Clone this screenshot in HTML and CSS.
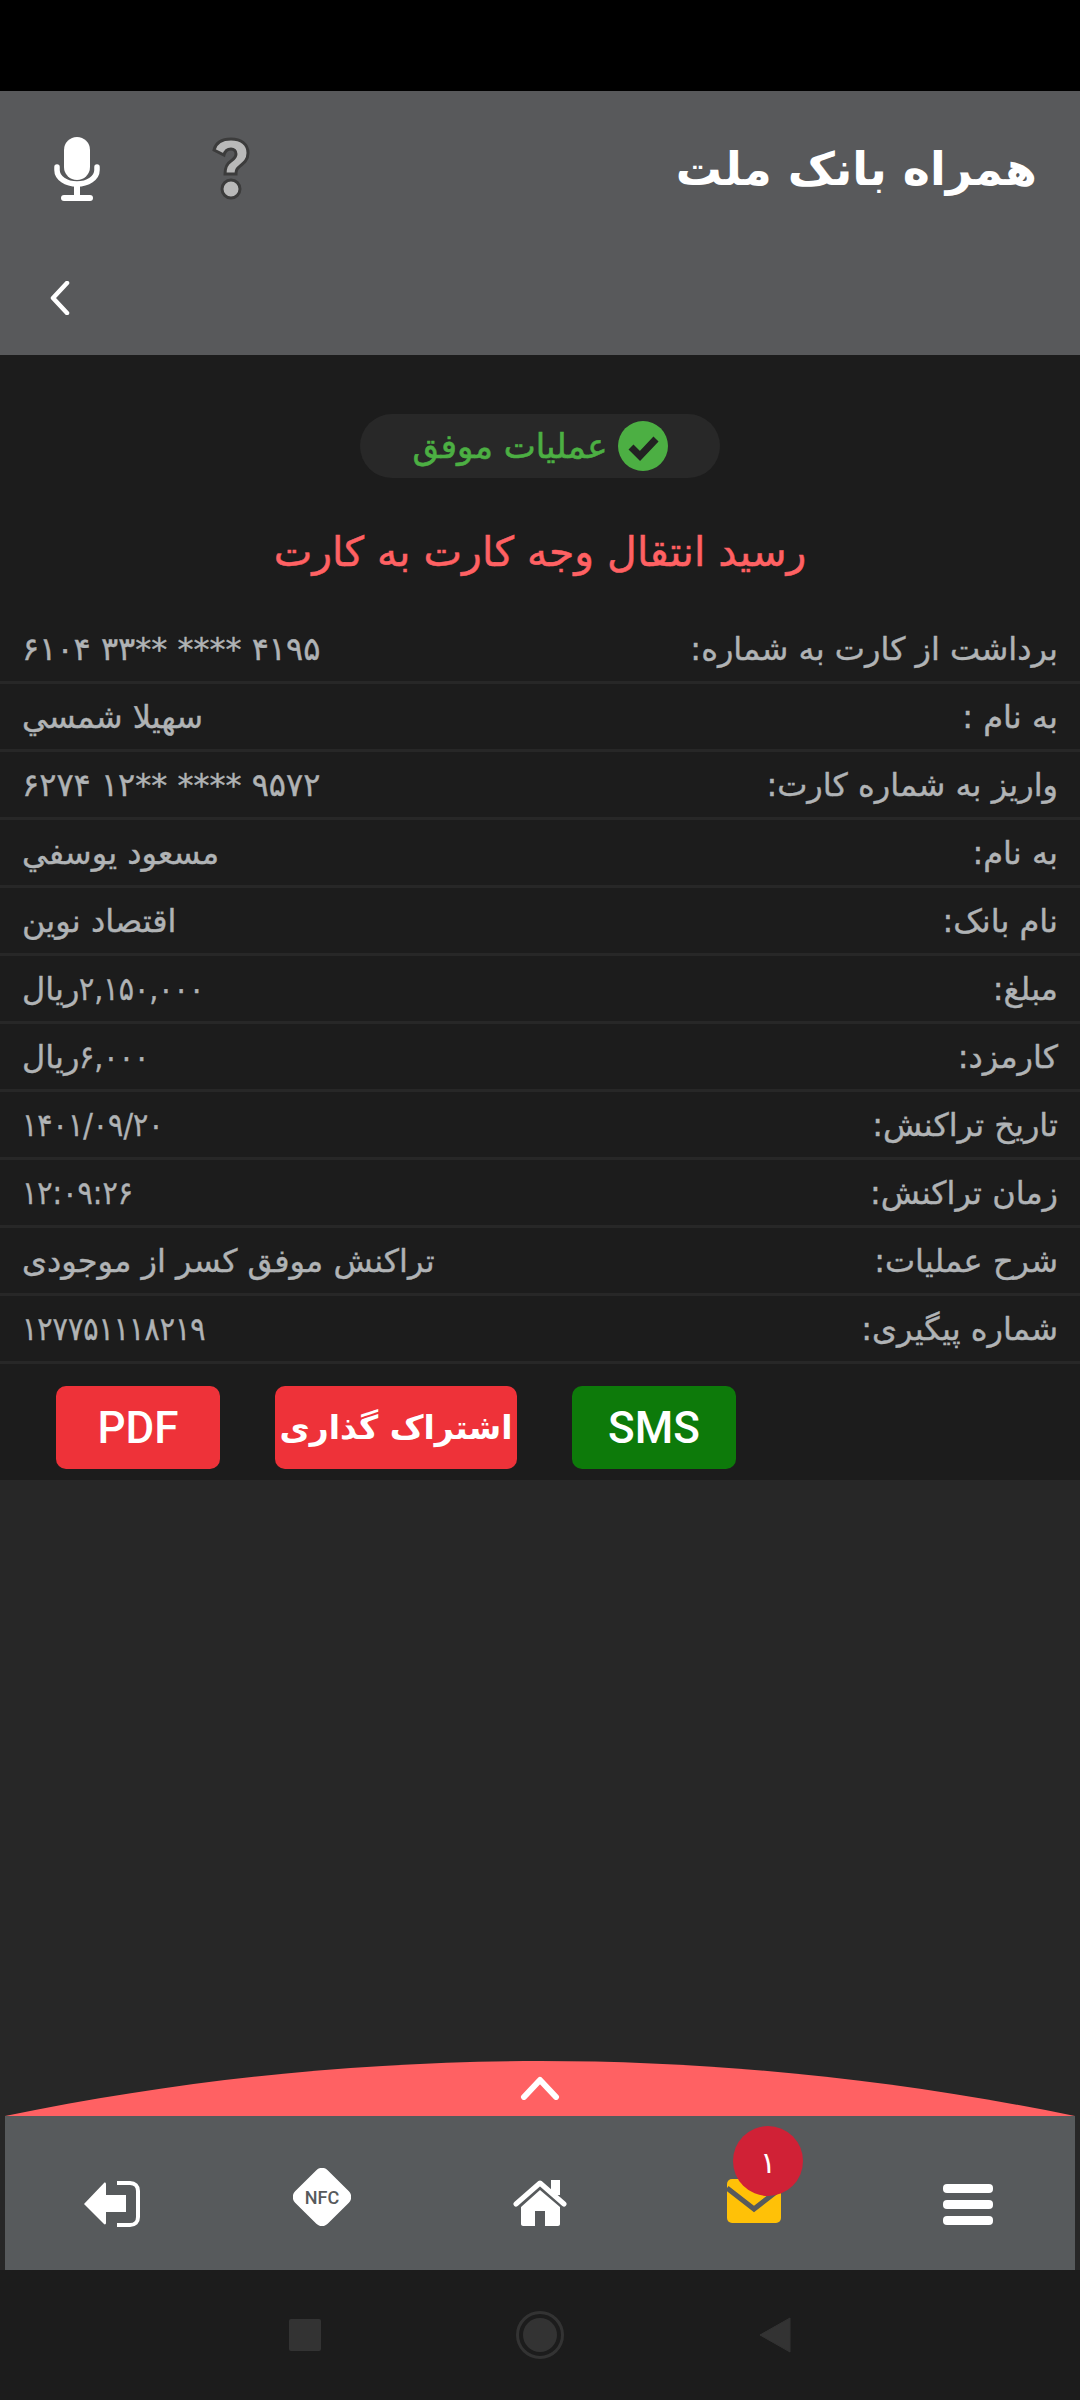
FILE: index.html
```html
<!DOCTYPE html>
<html lang="fa">
<head>
    <meta charset="UTF-8">
    <meta name="viewport" content="width=device-width, initial-scale=1.0">
    <title>همراه بانک ملت</title>
    <link rel="stylesheet" href="styles.css">
</head>
<body>
    <div class="status-bar"></div>

    <div class="header">
        <div class="header-top">
            <h1 class="app-title">همراه بانک ملت</h1>
            <div class="header-actions">
                <svg class="help-icon" viewBox="0 0 40 64"><path d="M3 13C5 5 12 2 20 2c10 0 17 5 17 14 0 7-4 10-9 14-3 2-3 4-3 7H14c0-6 1-10 6-13 3-2 5-4 5-7 0-3-2-5-5-5-4 0-6 2-7 6zM20 43a9 9 0 1 1 0 18 9 9 0 0 1 0-18z" fill="#b9b9b9" stroke="#3c3c3c" stroke-width="3"/></svg>
                <svg class="mic-icon" viewBox="0 0 46 64"><rect x="10" y="0" width="26" height="43" rx="13" fill="#fff"/><path d="M3 30v3c0 8 9 14 20 14s20-6 20-14v-3" fill="none" stroke="#fff" stroke-width="5.5" stroke-linecap="round"/><rect x="20" y="47" width="6" height="12" fill="#fff"/><rect x="7" y="58" width="32" height="6" rx="3" fill="#fff"/></svg>
            </div>
        </div>
        <div class="header-bottom">
            <svg class="back-icon" viewBox="0 0 20 34"><path d="M17 2L3 17l14 15" fill="none" stroke="#fff" stroke-width="4.5" stroke-linecap="round" stroke-linejoin="round"/></svg>
        </div>
    </div>

    <div class="content">
        <div class="receipt">
            <div class="status-pill">
                <svg class="check-icon" viewBox="0 0 50 50"><circle cx="25" cy="25" r="25" fill="#4caf43"/><path d="M13 26l9 9 16-17" fill="none" stroke="#222" stroke-width="7"/></svg>
                <span>عملیات موفق</span>
            </div>
            <h2 class="receipt-title">رسید انتقال وجه کارت به کارت</h2>

            <div class="rows">
                <div class="row"><span class="row-label">برداشت از کارت به شماره:</span><span class="row-value num">۶۱۰۴ ۳۳** **** ۴۱۹۵</span></div>
                <div class="row"><span class="row-label">به نام :</span><span class="row-value">سهيلا شمسي</span></div>
                <div class="row"><span class="row-label">واریز به شماره کارت:</span><span class="row-value num">۶۲۷۴ ۱۲** **** ۹۵۷۲</span></div>
                <div class="row"><span class="row-label">به نام:</span><span class="row-value">مسعود يوسفي</span></div>
                <div class="row"><span class="row-label">نام بانک:</span><span class="row-value">اقتصاد نوین</span></div>
                <div class="row"><span class="row-label">مبلغ:</span><span class="row-value"><span class="digits">۲,۱۵۰,۰۰۰</span>ریال</span></div>
                <div class="row"><span class="row-label">کارمزد:</span><span class="row-value"><span class="digits">۶,۰۰۰</span>ریال</span></div>
                <div class="row"><span class="row-label">تاریخ تراکنش:</span><span class="row-value num digits">۱۴۰۱/۰۹/۲۰</span></div>
                <div class="row"><span class="row-label">زمان تراکنش:</span><span class="row-value num digits">۱۲:۰۹:۲۶</span></div>
                <div class="row"><span class="row-label">شرح عملیات:</span><span class="row-value">تراکنش موفق کسر از موجودی</span></div>
                <div class="row"><span class="row-label">شماره پیگیری:</span><span class="row-value num digits">۱۲۷۷۵۱۱۱۸۲۱۹</span></div>
            </div>

            <div class="actions">
                <button class="btn btn-green">SMS</button>
                <button class="btn btn-red btn-share">اشتراک گذاری</button>
                <button class="btn btn-red">PDF</button>
            </div>
        </div>
    </div>

    <div class="footer">
        <div class="drawer-handle">
            <svg class="drawer-arc" viewBox="0 0 1070 55" preserveAspectRatio="none"><path d="M0 55C180 18 360 0 535 0s355 18 535 55z" fill="#ff6163"/></svg>
            <svg class="drawer-chevron" viewBox="0 0 40 24"><path d="M4 21L20 4l16 17" fill="none" stroke="#fff" stroke-width="6" stroke-linecap="round" stroke-linejoin="round"/></svg>
        </div>
        <div class="tabbar">
            <div class="tab tab-exit">
                <svg width="56" height="46" viewBox="0 0 56 46"><path d="M0 23L20 2c1-1 2 0 2 1v11h20v17H22v11c0 1-1 2-2 1z" fill="#fff"/><path d="M33 2h13c5 0 8 3 8 8v26c0 5-3 8-8 8H33" fill="none" stroke="#fff" stroke-width="4"/></svg>
            </div>
            <div class="tab tab-nfc">
                <svg width="58" height="58" viewBox="0 0 58 58"><rect x="6" y="6" width="46" height="46" rx="8" transform="rotate(45 29 29)" fill="#fff"/></svg>
                <span class="nfc-label">NFC</span>
            </div>
            <div class="tab tab-home">
                <svg width="54" height="46" viewBox="0 0 54 46"><path d="M3 24L27 3l24 21" fill="none" stroke="#fff" stroke-width="5" stroke-linecap="round" stroke-linejoin="round"/><rect x="38" y="0" width="9" height="15" fill="#fff"/><path d="M27 10l20 17v17c0 1-1 2-2 2H32V31H22v15H10c-1 0-2-1-2-2V27z" fill="#fff"/></svg>
            </div>
            <div class="tab tab-mail">
                <svg width="54" height="44" viewBox="0 0 54 44"><rect width="54" height="44" rx="5" fill="#ffc107"/><path d="M0 9l27 21 27-21" fill="none" stroke="#575a5c" stroke-width="5"/></svg>
                <span class="badge">۱</span>
            </div>
            <div class="tab tab-menu">
                <div class="menu-icon"><i></i><i></i><i></i></div>
            </div>
        </div>
    </div>

    <div class="system-nav">
        <svg width="32" height="32" viewBox="0 0 32 32"><rect width="32" height="32" rx="2" fill="#333"/></svg>
        <svg width="48" height="48" viewBox="0 0 48 48"><circle cx="24" cy="24" r="22.5" fill="none" stroke="#333" stroke-width="3"/><circle cx="24" cy="24" r="17" fill="#333"/></svg>
        <svg width="32" height="36" viewBox="0 0 32 36"><path d="M31 1v34L1 18z" fill="#333" stroke="#333" stroke-linejoin="round"/></svg>
    </div>
</body>
</html>
```

FILE: styles.css
```css
* {
    box-sizing: border-box;
}
html, body {
    height: 100%;
}
body {
    margin: 0;
    display: flex;
    flex-direction: column;
    background-color: #272727;
    font-family: "DejaVu Sans", "Noto Sans", sans-serif;
    direction: rtl;
}
.status-bar {
    height: 91px;
    background-color: #000;
}
.header {
    height: 264px;
    background-color: #58595b;
    display: flex;
    flex-direction: column;
}
.header-top {
    display: flex;
    align-items: center;
    justify-content: space-between;
    height: 156px;
    padding: 0 43px 0 54px;
}
.app-title {
    margin: 0;
    color: #fff;
    font-size: 46px;
    font-weight: bold;
}
.header-actions {
    display: flex;
    align-items: center;
    gap: 111px;
}
.help-icon {
    width: 40px;
    height: 64px;
}
.mic-icon {
    width: 46px;
    height: 64px;
}
.header-bottom {
    flex: 1;
    padding-left: 50px;
    direction: ltr;
}
.back-icon {
    display: block;
    width: 20px;
    height: 34px;
    margin-top: 34px;
}
.content {
    flex: 1;
}
.receipt {
    background-color: #1c1c1c;
    padding-top: 59px;
    height: 1125px;
}
.status-pill {
    display: flex;
    align-items: center;
    justify-content: center;
    gap: 10px;
    width: 360px;
    height: 64px;
    margin: 0 auto;
    border-radius: 32px;
    background-color: #282828;
    color: #4caf43;
    font-size: 34px;
    -webkit-text-stroke: 0.6px #4caf43;
}
.check-icon {
    width: 50px;
    height: 50px;
}
.receipt-title {
    margin: 50px 0 0;
    height: 88px;
    color: #ff6163;
    font-size: 41px;
    font-weight: normal;
    text-align: center;
    -webkit-text-stroke: 0.5px #ff6163;
}
.row {
    display: flex;
    align-items: center;
    justify-content: space-between;
    height: 68px;
    padding: 0 22px;
    border-bottom: 3px solid #272727;
    color: #b0b3b5;
    font-size: 32px;
    -webkit-text-stroke: 0.4px #b0b3b5;
}
.row-value.num {
    direction: ltr;
    unicode-bidi: bidi-override;
}
/* narrower figures, kept flush against the left edge of the value */
.digits {
    display: inline-block;
    transform: scaleX(0.89);
    transform-origin: left center;
}
.actions {
    display: flex;
    gap: 55px;
    padding-top: 22px;
    margin-right: 344px;
}
.btn {
    height: 83px;
    width: 164px;
    border: none;
    border-radius: 10px;
    color: #fff;
    font-family: "Roboto", sans-serif;
    font-size: 44px;
    font-weight: 500;
    padding: 0;
}
.btn-green {
    background-color: #0d7a0a;
}
.btn-red {
    background-color: #ee3239;
}
.btn-share {
    width: 242px;
    font-family: "DejaVu Sans", sans-serif;
    font-size: 33px;
    font-weight: bold;
}
.footer {
    padding: 0 5px;
}
.drawer-handle {
    position: relative;
    height: 55px;
}
.drawer-arc {
    display: block;
    width: 100%;
    height: 55px;
}
.drawer-chevron {
    position: absolute;
    left: 515px;
    top: 15px;
    width: 40px;
    height: 24px;
}
/* five equal tabs, each icon centred in its cell */
.tabbar {
    display: grid;
    grid-template-columns: repeat(5, 1fr);
    justify-items: center;
    align-items: center;
    direction: ltr;
    height: 154px;
    background-color: #575a5c;
}
.tab {
    position: relative;
    display: flex;
    align-items: center;
    justify-content: center;
}
.tab svg {
    display: block;
}
.tab-exit {
    margin-top: 22px;
}
.tab-nfc {
    margin-top: 8px;
    margin-right: 8px;
}
.tab-home {
    margin-top: 20px;
}
.tab-mail {
    margin-top: 16px;
}
.tab-menu {
    margin-top: 22px;
}
.nfc-label {
    position: absolute;
    color: #575a5c;
    font-family: "Roboto", sans-serif;
    font-size: 18px;
    font-weight: 500;
}
.badge {
    position: absolute;
    left: 6px;
    top: -53px;
    width: 70px;
    height: 70px;
    border-radius: 50%;
    background-color: #d02136;
    color: #fff;
    font-size: 30px;
    text-align: center;
    line-height: 74px;
}
.menu-icon {
    display: flex;
    flex-direction: column;
    gap: 7px;
    width: 50px;
}
.menu-icon i {
    display: block;
    height: 9px;
    border-radius: 4px;
    background-color: #fff;
}
.system-nav {
    height: 130px;
    background-color: #1c1c1c;
    display: flex;
    direction: ltr;
    align-items: center;
    justify-content: center;
    gap: 195px;
}
```
